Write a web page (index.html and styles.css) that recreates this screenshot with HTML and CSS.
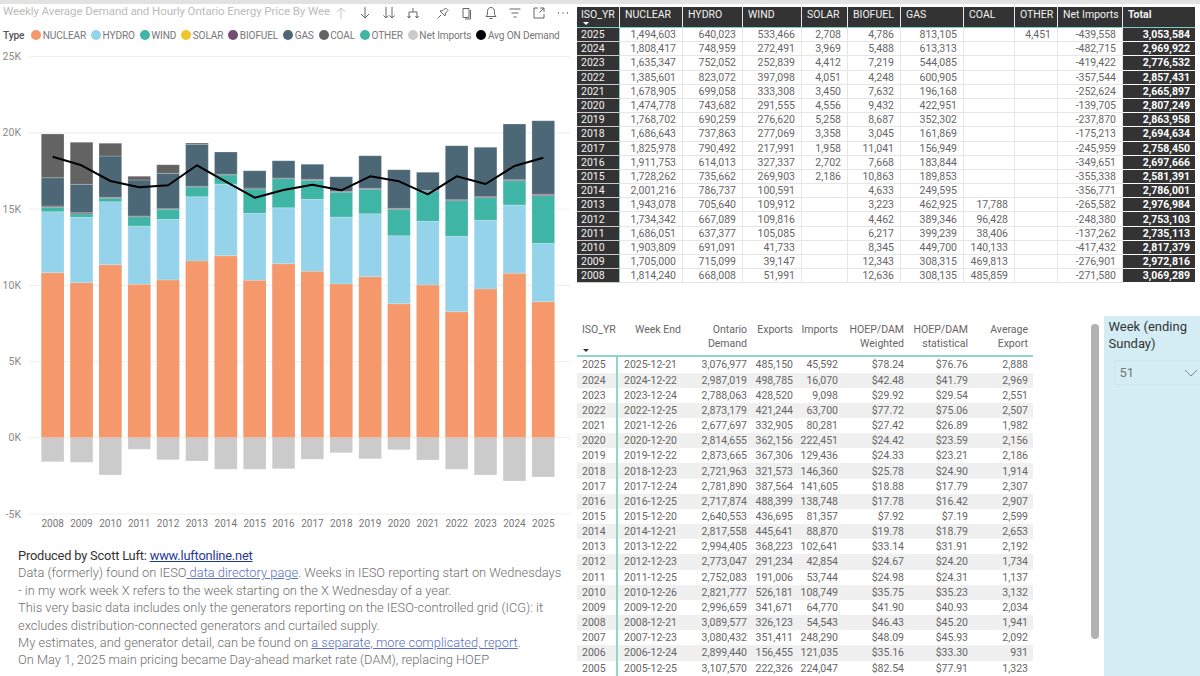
FILE: index.html
```html
<!DOCTYPE html>
<html lang="en">
<head>
<meta charset="utf-8">
<title>Ontario Energy Dashboard</title>
<link rel="stylesheet" href="styles.css">
</head>
<body>
<div class="page">
<section class="left">
  <header class="tilehead">
    <div class="title">Weekly Average Demand and Hourly Ontario Energy Price By Wee</div>
    <div class="icons">
      <svg class="ic up" viewBox="0 0 14 14"><path d="M7 13V2M3 6l4-4 4 4"/></svg>
      <svg class="ic" viewBox="0 0 14 14"><path d="M7 1v11M3 8l4 4 4-4"/></svg>
      <svg class="ic" viewBox="0 0 14 14"><path d="M4 1v11M1.500 9.500L4 12l2.500-2.500M10 1v11M7.500 9.500L10 12l2.500-2.500"/></svg>
      <svg class="ic" viewBox="0 0 14 14"><path d="M7 2v4M3 12V6h8v6M1.500 10L3 12l1.500-2M9.500 10l1.500 2 1.500-2"/></svg>
      <svg class="ic gap" viewBox="0 0 14 14"><path d="M1.500 12.500L5 9M4 5l5 5 .5-3L12 4.500 9.500 2 7 4.500z"/></svg>
      <svg class="ic" viewBox="0 0 14 14"><path d="M3 2.500h6v9H3zM10.500 4v9H5"/></svg>
      <svg class="ic" viewBox="0 0 14 14"><path d="M7 1.500c-2.500 0-3.500 2-3.500 4v3L2 10.500h10L10.500 8.500v-3c0-2-1-4-3.500-4zM5.500 12.500h3"/></svg>
      <svg class="ic" viewBox="0 0 14 14"><path d="M1.500 3h11M3.500 7h7M5.500 11h3"/></svg>
      <svg class="ic" viewBox="0 0 14 14"><path d="M6 2H2v10h10V8M8 2h4v4M12 2L7.500 6.500"/></svg>
      <svg class="ic" viewBox="0 0 14 14"><path class="dots" d="M2 7h1M6.500 7h1M11 7h1"/></svg>
    </div>
  </header>
  <div class="legend">
    <b>Type</b>
    <span class="lg"><i class="dot c-nuc"></i>NUCLEAR</span>
    <span class="lg"><i class="dot c-hyd"></i>HYDRO</span>
    <span class="lg"><i class="dot c-win"></i>WIND</span>
    <span class="lg"><i class="dot c-sol"></i>SOLAR</span>
    <span class="lg"><i class="dot c-bio"></i>BIOFUEL</span>
    <span class="lg"><i class="dot c-gas"></i>GAS</span>
    <span class="lg"><i class="dot c-coa"></i>COAL</span>
    <span class="lg"><i class="dot c-oth"></i>OTHER</span>
    <span class="lg"><i class="dot c-net"></i>Net Imports</span>
    <span class="lg"><i class="dot c-avg"></i>Avg ON Demand</span>
  </div>
  <svg class="chart" viewBox="0 45 577 490">
    <g class="grid">
      <path d="M29 56.500H570M29 132.800H570M29 209H570M29 285.300H570M29 361.500H570M29 437.500H570M29 514H570"/>
    </g>
    <g class="yl">
      <text x="21" y="60">25K</text><text x="21" y="136">20K</text><text x="21" y="212.500">15K</text><text x="21" y="289">10K</text><text x="21" y="365">5K</text><text x="21" y="441">0K</text><text x="21" y="517.500">-5K</text>
    </g>
    <path class="b-net" d="M41.300 437.500h22.700V461.700h-22.700zM70.200 437.500h22.700V462.300h-22.700zM99 437.500h22.700V475h-22.700zM127.900 437.500h22.700V449.300h-22.700zM156.700 437.500h22.700V459.700h-22.700zM185.600 437.500h22.700V461h-22.700zM214.500 437.500h22.700V469.300h-22.700zM243.300 437.500h22.700V469.300h-22.700zM272.200 437.500h22.700V468.700h-22.700zM301 437.500h22.700V459.300h-22.700zM329.900 437.500h22.700V452.700h-22.700zM358.800 437.500h22.700V458.700h-22.700zM387.600 437.500h22.700V449.700h-22.700zM416.500 437.500h22.700V460h-22.700zM445.300 437.500h22.700V469.300h-22.700zM474.200 437.500h22.700V475h-22.700zM503.100 437.500h22.700V481h-22.700zM531.900 437.500h22.700V477h-22.700z"/>
    <path class="b-nuc" d="M41.300 272.700h22.700V437.500h-22.700zM70.200 282.700h22.700V437.500h-22.700zM99 264.700h22.700V437.500h-22.700zM127.900 284.300h22.700V437.500h-22.700zM156.700 280h22.700V437.500h-22.700zM185.600 261h22.700V437.500h-22.700zM214.500 255.700h22.700V437.500h-22.700zM243.300 280.300h22.700V437.500h-22.700zM272.200 263.700h22.700V437.500h-22.700zM301 271.300h22.700V437.500h-22.700zM329.900 284h22.700V437.500h-22.700zM358.800 276.700h22.700V437.500h-22.700zM387.600 303.700h22.700V437.500h-22.700zM416.500 285h22.700V437.500h-22.700zM445.300 311.700h22.700V437.500h-22.700zM474.200 289h22.700V437.500h-22.700zM503.100 273.300h22.700V437.500h-22.700zM531.900 301.700h22.700V437.500h-22.700z"/>
    <path class="b-hyd" d="M41.300 211.700h22.700V272.700h-22.700zM70.200 217.300h22.700V282.700h-22.700zM99 201.700h22.700V264.700h-22.700zM127.900 226h22.700V284.300h-22.700zM156.700 219.300h22.700V280h-22.700zM185.600 196.700h22.700V261h-22.700zM214.500 184h22.700V255.700h-22.700zM243.300 213.300h22.700V280.300h-22.700zM272.200 207.700h22.700V263.700h-22.700zM301 199.300h22.700V271.300h-22.700zM329.900 217h22.700V284h-22.700zM358.800 213.700h22.700V276.700h-22.700zM387.600 235.700h22.700V303.700h-22.700zM416.500 221.300h22.700V285h-22.700zM445.300 236.300h22.700V311.700h-22.700zM474.200 220.300h22.700V289h-22.700zM503.100 205h22.700V273.300h-22.700zM531.900 243.300h22.700V301.700h-22.700z"/>
    <path class="b-win" d="M41.300 207.300h22.700V211.700h-22.700zM70.200 214h22.700V217.300h-22.700zM99 198.300h22.700V201.700h-22.700zM127.900 216.700h22.700V226h-22.700zM156.700 209.300h22.700V219.300h-22.700zM185.600 187h22.700V196.700h-22.700zM214.500 175h22.700V184h-22.700zM243.300 189h22.700V213.300h-22.700zM272.200 178.700h22.700V207.700h-22.700zM301 180.300h22.700V199.300h-22.700zM329.900 192.300h22.700V217h-22.700zM358.800 189.300h22.700V213.700h-22.700zM387.600 209.300h22.700V235.700h-22.700zM416.500 191h22.700V221.300h-22.700zM445.300 200.700h22.700V236.300h-22.700zM474.200 197.700h22.700V220.300h-22.700zM503.100 180.700h22.700V205h-22.700zM531.900 195.700h22.700V243.300h-22.700z"/>
    <path class="b-bio" d="M41.300 206h22.700V207.300h-22.700zM70.200 212.700h22.700V214h-22.700zM99 197.300h22.700V198.300h-22.700zM127.900 216h22.700V216.700h-22.700zM156.700 208.700h22.700V209.300h-22.700zM185.600 186.300h22.700V187h-22.700zM214.500 174.300h22.700V175h-22.700zM243.300 188h22.700V189h-22.700zM272.200 178h22.700V178.700h-22.700zM301 179.300h22.700V180.300h-22.700zM329.900 191.300h22.700V192.300h-22.700zM358.800 188.300h22.700V189.300h-22.700zM387.600 208.300h22.700V209.300h-22.700zM416.500 190.300h22.700V191h-22.700zM445.300 199.700h22.700V200.700h-22.700zM474.200 196.700h22.700V197.700h-22.700zM503.100 179.700h22.700V180.700h-22.700zM531.900 194.300h22.700V195.700h-22.700z"/>
    <path class="b-gas" d="M41.300 177.700h22.700V206h-22.700zM70.200 184.300h22.700V212.700h-22.700zM99 156h22.700V197.300h-22.700zM127.900 180h22.700V216h-22.700zM156.700 173.300h22.700V208.700h-22.700zM185.600 144.300h22.700V186.300h-22.700zM214.500 152h22.700V174.300h-22.700zM243.300 170.700h22.700V188h-22.700zM272.200 160.700h22.700V178h-22.700zM301 164.300h22.700V179.300h-22.700zM329.900 176.700h22.700V191.300h-22.700zM358.800 155.700h22.700V188.300h-22.700zM387.600 169.700h22.700V208.300h-22.700zM416.500 172.300h22.700V190.300h-22.700zM445.300 145.700h22.700V199.700h-22.700zM474.200 147.300h22.700V196.700h-22.700zM503.100 124h22.700V179.700h-22.700zM531.900 120.700h22.700V194.300h-22.700z"/>
    <path class="b-coa" d="M41.300 134h22.700V177.700h-22.700zM70.200 142.300h22.700V184.300h-22.700zM99 143.300h22.700V156h-22.700zM127.900 176.300h22.700V180h-22.700zM156.700 164.700h22.700V173.300h-22.700zM185.600 143h22.700V144.300h-22.700z"/>
    <polyline class="avg" points="52.700,156.700 81.500,165.300 110.400,181 139.200,187.300 168.100,185.300 197,165.300 225.800,181.700 254.700,197.700 283.500,190 312.400,184.700 341.300,190.300 370.100,176.300 399,181.300 427.800,194.300 456.700,176.300 485.600,184 514.400,166 543.300,157.700"/>
    <g class="xl">
      <text x="52.700" y="527">2008</text><text x="81.500" y="527">2009</text><text x="110.400" y="527">2010</text><text x="139.200" y="527">2011</text><text x="168.100" y="527">2012</text><text x="197" y="527">2013</text><text x="225.800" y="527">2014</text><text x="254.700" y="527">2015</text><text x="283.500" y="527">2016</text><text x="312.400" y="527">2017</text><text x="341.300" y="527">2018</text><text x="370.100" y="527">2019</text><text x="399" y="527">2020</text><text x="427.800" y="527">2021</text><text x="456.700" y="527">2022</text><text x="485.600" y="527">2023</text><text x="514.400" y="527">2024</text><text x="543.300" y="527">2025</text>
    </g>
  </svg>
  <div class="notes">
    <p><span class="strong">Produced by Scott Luft: </span><a class="l1" href="#">www.luftonline.net</a></p>
    <p>Data (formerly) found on IESO<a class="l2" href="#"> data directory page</a>. Weeks in IESO reporting start on Wednesdays</p>
    <p>- in my work week X refers to the week starting on the X Wednesday of a year.</p>
    <p>This very basic data includes only the generators reporting on the IESO-controlled grid (ICG): it</p>
    <p>excludes distribution-connected generators and curtailed supply.</p>
    <p>My estimates, and generator detail, can be found on <a class="l2" href="#">a separate, more complicated, report</a>.</p>
    <p>On May 1, 2025 main pricing became Day-ahead market rate (DAM), replacing HOEP</p>
  </div>
</section>
<section class="right">
  <table class="t1">
    <colgroup><col class="a1"><col class="a2"><col class="a3"><col class="a4"><col class="a5"><col class="a6"><col class="a7"><col class="a8"><col class="a9"><col class="a10"><col class="a11"></colgroup>
    <thead><tr><th class="yr">ISO_YR<span class="sort"></span></th><th>NUCLEAR</th><th>HYDRO</th><th>WIND</th><th>SOLAR</th><th>BIOFUEL</th><th>GAS</th><th>COAL</th><th>OTHER</th><th>Net Imports</th><th class="tot">Total</th></tr></thead>
    <tbody>
<tr><th>2025</th><td>1,494,603</td><td>640,023</td><td>533,466</td><td>2,708</td><td>4,786</td><td>813,105</td><td></td><td>4,451</td><td>-439,558</td><td class="tot">3,053,584</td></tr>
<tr><th>2024</th><td>1,808,417</td><td>748,959</td><td>272,491</td><td>3,969</td><td>5,488</td><td>613,313</td><td></td><td></td><td>-482,715</td><td class="tot">2,969,922</td></tr>
<tr><th>2023</th><td>1,635,347</td><td>752,052</td><td>252,839</td><td>4,412</td><td>7,219</td><td>544,085</td><td></td><td></td><td>-419,422</td><td class="tot">2,776,532</td></tr>
<tr><th>2022</th><td>1,385,601</td><td>823,072</td><td>397,098</td><td>4,051</td><td>4,248</td><td>600,905</td><td></td><td></td><td>-357,544</td><td class="tot">2,857,431</td></tr>
<tr><th>2021</th><td>1,678,905</td><td>699,058</td><td>333,308</td><td>3,450</td><td>7,632</td><td>196,168</td><td></td><td></td><td>-252,624</td><td class="tot">2,665,897</td></tr>
<tr><th>2020</th><td>1,474,778</td><td>743,682</td><td>291,555</td><td>4,556</td><td>9,432</td><td>422,951</td><td></td><td></td><td>-139,705</td><td class="tot">2,807,249</td></tr>
<tr><th>2019</th><td>1,768,702</td><td>690,259</td><td>276,620</td><td>5,258</td><td>8,687</td><td>352,302</td><td></td><td></td><td>-237,870</td><td class="tot">2,863,958</td></tr>
<tr><th>2018</th><td>1,686,643</td><td>737,863</td><td>277,069</td><td>3,358</td><td>3,045</td><td>161,869</td><td></td><td></td><td>-175,213</td><td class="tot">2,694,634</td></tr>
<tr><th>2017</th><td>1,825,978</td><td>790,492</td><td>217,991</td><td>1,958</td><td>11,041</td><td>156,949</td><td></td><td></td><td>-245,959</td><td class="tot">2,758,450</td></tr>
<tr><th>2016</th><td>1,911,753</td><td>614,013</td><td>327,337</td><td>2,702</td><td>7,668</td><td>183,844</td><td></td><td></td><td>-349,651</td><td class="tot">2,697,666</td></tr>
<tr><th>2015</th><td>1,728,262</td><td>735,662</td><td>269,903</td><td>2,186</td><td>10,863</td><td>189,853</td><td></td><td></td><td>-355,338</td><td class="tot">2,581,391</td></tr>
<tr><th>2014</th><td>2,001,216</td><td>786,737</td><td>100,591</td><td></td><td>4,633</td><td>249,595</td><td></td><td></td><td>-356,771</td><td class="tot">2,786,001</td></tr>
<tr><th>2013</th><td>1,943,078</td><td>705,640</td><td>109,912</td><td></td><td>3,223</td><td>462,925</td><td>17,788</td><td></td><td>-265,582</td><td class="tot">2,976,984</td></tr>
<tr><th>2012</th><td>1,734,342</td><td>667,089</td><td>109,816</td><td></td><td>4,462</td><td>389,346</td><td>96,428</td><td></td><td>-248,380</td><td class="tot">2,753,103</td></tr>
<tr><th>2011</th><td>1,686,051</td><td>637,377</td><td>105,085</td><td></td><td>6,217</td><td>399,239</td><td>38,406</td><td></td><td>-137,262</td><td class="tot">2,735,113</td></tr>
<tr><th>2010</th><td>1,903,809</td><td>691,091</td><td>41,733</td><td></td><td>8,345</td><td>449,700</td><td>140,133</td><td></td><td>-417,432</td><td class="tot">2,817,379</td></tr>
<tr><th>2009</th><td>1,705,000</td><td>715,099</td><td>39,147</td><td></td><td>12,343</td><td>308,315</td><td>469,813</td><td></td><td>-276,901</td><td class="tot">2,972,816</td></tr>
<tr><th>2008</th><td>1,814,240</td><td>668,008</td><td>51,991</td><td></td><td>12,636</td><td>308,135</td><td>485,859</td><td></td><td>-271,580</td><td class="tot">3,069,289</td></tr>
    </tbody>
  </table>
  <div class="lower">
    <table class="t2">
      <colgroup><col class="b1"><col class="b2"><col class="b3"><col class="b4"><col class="b5"><col class="b6"><col class="b7"><col class="b8"></colgroup>
      <thead><tr><th class="lf">ISO_YR<span class="sort"></span></th><th class="lf wk">Week End</th><th>Ontario Demand</th><th>Exports</th><th>Imports</th><th>HOEP/DAM Weighted</th><th>HOEP/DAM statistical</th><th>Average Export</th></tr></thead>
      <tbody>
<tr><th>2025</th><td class="lf">2025-12-21</td><td>3,076,977</td><td>485,150</td><td>45,592</td><td>$78.24</td><td>$76.76</td><td>2,888</td></tr>
<tr><th>2024</th><td class="lf">2024-12-22</td><td>2,987,019</td><td>498,785</td><td>16,070</td><td>$42.48</td><td>$41.79</td><td>2,969</td></tr>
<tr><th>2023</th><td class="lf">2023-12-24</td><td>2,788,063</td><td>428,520</td><td>9,098</td><td>$29.92</td><td>$29.54</td><td>2,551</td></tr>
<tr><th>2022</th><td class="lf">2022-12-25</td><td>2,873,179</td><td>421,244</td><td>63,700</td><td>$77.72</td><td>$75.06</td><td>2,507</td></tr>
<tr><th>2021</th><td class="lf">2021-12-26</td><td>2,677,697</td><td>332,905</td><td>80,281</td><td>$27.42</td><td>$26.89</td><td>1,982</td></tr>
<tr><th>2020</th><td class="lf">2020-12-20</td><td>2,814,655</td><td>362,156</td><td>222,451</td><td>$24.42</td><td>$23.59</td><td>2,156</td></tr>
<tr><th>2019</th><td class="lf">2019-12-22</td><td>2,873,665</td><td>367,306</td><td>129,436</td><td>$24.33</td><td>$23.21</td><td>2,186</td></tr>
<tr><th>2018</th><td class="lf">2018-12-23</td><td>2,721,963</td><td>321,573</td><td>146,360</td><td>$25.78</td><td>$24.90</td><td>1,914</td></tr>
<tr><th>2017</th><td class="lf">2017-12-24</td><td>2,781,890</td><td>387,564</td><td>141,605</td><td>$18.88</td><td>$17.79</td><td>2,307</td></tr>
<tr><th>2016</th><td class="lf">2016-12-25</td><td>2,717,874</td><td>488,399</td><td>138,748</td><td>$17.78</td><td>$16.42</td><td>2,907</td></tr>
<tr><th>2015</th><td class="lf">2015-12-20</td><td>2,640,553</td><td>436,695</td><td>81,357</td><td>$7.92</td><td>$7.19</td><td>2,599</td></tr>
<tr><th>2014</th><td class="lf">2014-12-21</td><td>2,817,558</td><td>445,641</td><td>88,870</td><td>$19.78</td><td>$18.79</td><td>2,653</td></tr>
<tr><th>2013</th><td class="lf">2013-12-22</td><td>2,994,405</td><td>368,223</td><td>102,641</td><td>$33.14</td><td>$31.91</td><td>2,192</td></tr>
<tr><th>2012</th><td class="lf">2012-12-23</td><td>2,773,047</td><td>291,234</td><td>42,854</td><td>$24.67</td><td>$24.20</td><td>1,734</td></tr>
<tr><th>2011</th><td class="lf">2011-12-25</td><td>2,752,083</td><td>191,006</td><td>53,744</td><td>$24.98</td><td>$24.31</td><td>1,137</td></tr>
<tr><th>2010</th><td class="lf">2010-12-26</td><td>2,821,777</td><td>526,181</td><td>108,749</td><td>$35.75</td><td>$35.23</td><td>3,132</td></tr>
<tr><th>2009</th><td class="lf">2009-12-20</td><td>2,996,659</td><td>341,671</td><td>64,770</td><td>$41.90</td><td>$40.93</td><td>2,034</td></tr>
<tr><th>2008</th><td class="lf">2008-12-21</td><td>3,089,577</td><td>326,123</td><td>54,543</td><td>$46.43</td><td>$45.20</td><td>1,941</td></tr>
<tr><th>2007</th><td class="lf">2007-12-23</td><td>3,080,432</td><td>351,411</td><td>248,290</td><td>$48.09</td><td>$45.93</td><td>2,092</td></tr>
<tr><th>2006</th><td class="lf">2006-12-24</td><td>2,899,440</td><td>156,455</td><td>121,035</td><td>$35.16</td><td>$33.30</td><td>931</td></tr>
<tr><th>2005</th><td class="lf">2005-12-25</td><td>3,107,570</td><td>222,326</td><td>224,047</td><td>$82.54</td><td>$77.91</td><td>1,323</td></tr>
      </tbody>
    </table>
    <div class="scrollbar"></div>
    <aside class="slicer">
      <div class="sl-title">Week (ending Sunday)</div>
      <div class="dropdown"><span>51</span><svg class="chev" viewBox="0 0 14 8"><path d="M1 1l6 6 6-6"/></svg></div>
    </aside>
  </div>
</section>
</div>
</body>
</html>
```
FILE: styles.css
```css
* { box-sizing: border-box; }
html, body { margin: 0; padding: 0; }
body {
  width: 1200px; height: 676px; overflow: hidden; background: #fff;
  font-family: Roboto, "Open Sans", "Liberation Sans", sans-serif;
  color: #666;
  border-top: 4px solid #e2e2e2;
}
.page { display: flex; height: 672px; }
.left { width: 577px; flex: none; display: flex; flex-direction: column; }
.right { flex: 1; min-width: 0; display: flex; flex-direction: column; padding-top: 3px; }

.tilehead { display: flex; align-items: center; height: 16px; margin-top: 1px; }
.title {
  width: 329px; margin-left: 3px; white-space: nowrap;
  font-size: 11.6px; line-height: 12px; padding-bottom: 4px; color: #bcbcbc; flex: none; letter-spacing: -.12px;
}
.icons { display: flex; margin-left: 2px; gap: 10px; align-items: center; }
.ic { width: 14px; height: 14px; fill: none; stroke: #666; stroke-width: 1; }
.ic.up { stroke: #c4c4c4; }
.ic.gap { margin-left: 6px; }
.dots { stroke-width: 1.4; }

.legend {
  display: flex; align-items: center; height: 14px; margin-top: 7px; margin-left: 3px;
  font-size: 10.1px; color: #777; gap: 5px; white-space: nowrap; letter-spacing: -.14px;
}
.legend b { font-weight: 500; color: #555; margin-right: 2px; }
.lg { display: flex; align-items: center; gap: 1.500px; }
.dot { width: 10px; height: 10px; border-radius: 50%; display: block; }
.c-nuc { background: #f5986b; } .c-hyd { background: #95d3ea; } .c-win { background: #3fb5a5; }
.c-sol { background: #f0c52e; } .c-bio { background: #744d72; } .c-gas { background: #4c6876; }
.c-coa { background: #636363; } .c-oth { background: #3fb5a5; } .c-net { background: #cbcbcb; }
.c-avg { background: #000; }

.chart { display: block; width: 577px; height: 490px; flex: none; margin-top: 3px; }
.grid path { stroke: #f0f0f0; stroke-width: 1.2; fill: none; }
.yl text { font-size: 10.5px; fill: #8a8a8a; text-anchor: end; font-family: Roboto, sans-serif; }
.xl text { font-size: 10px; fill: #777; text-anchor: middle; font-family: Roboto, sans-serif; }
.b-nuc { fill: #f5986b; } .b-hyd { fill: #95d3ea; } .b-win { fill: #3fb5a5; }
.b-bio { fill: #9a7a8a; } .b-gas { fill: #4c6876; } .b-coa { fill: #636363; } .b-net { fill: #cbcbcb; }
.b-net, .b-gas, .b-coa, .b-hyd, .b-win { stroke: rgba(255,255,255,.35); stroke-width: .6; }
.avg { fill: none; stroke: #000; stroke-width: 2; stroke-linejoin: round; }

.notes { margin: 12px 0 0 18px; font-size: 12.87px; line-height: 17.4px; color: #6f6f6f; font-weight: 300; white-space: nowrap; }
.notes p { margin: 0; }
.strong { color: #333; font-weight: 400; letter-spacing: -.2px; }
a.l1 { color: #1f3a93; font-weight: 400; letter-spacing: -.2px; }
a.l2 { color: #5a70c0; }

table { border-collapse: separate; border-spacing: 0; table-layout: fixed; font-size: 10.5px; }
.t1 { width: 618px; }
.a1 { width: 43px; } .a2 { width: 63px; } .a3 { width: 60px; } .a4 { width: 59px; }
.a5 { width: 46px; } .a6 { width: 53px; } .a7 { width: 63px; } .a8 { width: 51px; }
.a9 { width: 43px; } .a10 { width: 65px; } .a11 { width: 72px; }
.t1 thead th {
  height: 21px; background: #333; color: #f2f2f2; font-weight: 400; text-align: left;
  padding: 0 0 6px 5px; border-right: 1px solid #e8e8e8; border-bottom: 1px solid #7fcfc4;
  white-space: nowrap; position: relative; vertical-align: middle;
}
.t1 thead th.yr { padding-left: 4px; }
.t1 thead th.tot { font-weight: 700; border-right: 0; }
.t1 tbody th {
  background: #333; color: #f2f2f2; font-weight: 400; text-align: left; padding: 1px 0 0 4px;
  border-bottom: 1px solid #ccc; border-right: 1px solid #7fcfc4;
}
.t1 tbody tr { height: 14.2px; }
.t1 td {
  text-align: right; padding: 1px 6px 0 0; color: #666; line-height: 12px;
  border-bottom: 1px solid #e6e6e6; border-right: 1px solid #e6e6e6;
}
.t1 tbody td.tot { background: #333; color: #fff; font-weight: 700; border-right: 0; border-bottom-color: #fff; padding-right: 5px; }
.t1 tbody th { line-height: 12px; }
.t1 tbody th, .t1 td { height: 14.2px; }

.sort {
  position: absolute; left: 6px; bottom: 2px;
  border-left: 3.500px solid transparent; border-right: 3.500px solid transparent; border-top: 3.500px solid #fff;
}
.t2 .sort { border-top-color: #333; bottom: 3px; }

.lower { display: flex; margin-top: 38px; flex: 1; min-height: 0; }
.t2 { width: 456px; flex: none; align-self: flex-start; }
.b1 { width: 41px; } .b2 { width: 67px; } .b3 { width: 67px; } .b4 { width: 46px; }
.b5 { width: 45px; } .b6 { width: 66px; } .b7 { width: 64px; } .b8 { width: 60px; }
.t2 thead th {
  height: 36px; font-weight: 400; color: #666; text-align: right; vertical-align: top;
  padding: 2px 5px 0 2px; border-bottom: 2px solid #8fd6cb; position: relative; line-height: 14px; white-space: normal;
}
.t2 thead th.lf { text-align: left; padding-left: 5px; }
.t2 thead th.wk { padding-left: 17px; white-space: nowrap; }
.t2 tbody th { font-weight: 400; color: #666; text-align: left; padding: 0 0 0 5px; border-right: 2px solid #8fd6cb; }
.t2 tbody tr { height: 15.16px; }
.t2 tbody tr:nth-child(even) th, .t2 tbody tr:nth-child(even) td { background: #f0f0f0; }
.t2 td { text-align: right; padding: 0 5px 0 0; color: #666; height: 15.16px; line-height: 13px; }
.t2 td.lf { text-align: left; padding-left: 6px; }

.scrollbar { width: 7.500px; height: 315px; margin: 3px 0 0 58px; background: #b2b2b2; border-radius: 4px; flex: none; }
.slicer { width: 97px; margin: -5px 0 0 5px; flex: none; background: #d4edf5; padding: 2px 0 0 5px; height: 366px; }
.sl-title { font-size: 13px; line-height: 17px; color: #333; }
.dropdown {
  display: flex; align-items: center; justify-content: space-between; height: 25px; margin: 8px 0 0 5px;
  padding: 0 3px 0 5px; border: 1px solid #c9e5ee; border-right: 0; color: #777; font-size: 13px;
}
.chev { width: 14px; height: 8px; fill: none; stroke: #888; stroke-width: 1; }
```
